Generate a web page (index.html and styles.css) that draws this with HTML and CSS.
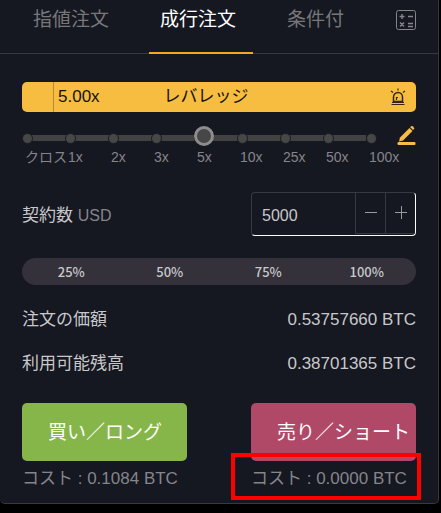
FILE: index.html
```
<!DOCTYPE html>
<html lang="ja">
<head>
    <meta charset="UTF-8">
    <meta name="viewport" content="width=device-width, initial-scale=1.0">
    <title>成行注文</title>
    <link rel="stylesheet" href="styles.css">
</head>
<body>
<div class="order-panel">
    <nav class="tabs">
        <button type="button" class="tab">指値注文</button>
        <button type="button" class="tab active">成行注文</button>
        <button type="button" class="tab">条件付</button>
        <button type="button" class="icon-button calc-button" aria-label="計算機">
            <svg width="20" height="20" viewBox="0 0 20 20" fill="none" stroke="#85858a">
                <rect x="0.5" y="0.5" width="19" height="19" rx="2"/>
                <path d="M3.500 6.500h5M6 4v5M12 6.500h5M4 12.500l4 4M8 12.500l-4 4M12 13.500h5M12 16.500h5" stroke-width="1.400"/>
            </svg>
        </button>
    </nav>

    <form class="order-form">
        <div class="leverage-bar">
            <span class="leverage-value">5.00x</span>
            <label for="leverage">レバレッジ</label>
            <svg class="alarm-icon" width="16" height="18" viewBox="0 0 16 18" fill="none" stroke="#33270f">
                <path d="M3.500 13.500V9a4.500 4.500 0 0 1 9 0v4.500z" stroke-width="1.500"/>
                <path d="M6.500 12V9.500h1.500M2 14.500h12M1.500 16.500h13M8 0.500v2M1 3l2 1.500M15 3l-2 1.500" stroke-width="1.200"/>
            </svg>
        </div>

        <div class="slider-row">
            <div class="slider">
                <div class="slider-dots">
                    <i></i><i></i><i></i><i></i><i></i><i></i><i></i><i></i><i></i>
                </div>
                <input type="range" id="leverage" min="0" max="80" step="1" value="41">
            </div>
            <button type="button" class="icon-button" aria-label="編集">
                <svg width="19" height="20" viewBox="0 0 19 20" fill="#f6bd41">
                    <path d="M3 11.500L12.500 2l3 3L6 14.500l-4 1z"/>
                    <path d="M13.200 1.300l1-1a1 1 0 0 1 1.400 0l1.400 1.400a1 1 0 0 1 0 1.400l-1 1z"/>
                    <rect x="0.500" y="16" width="18" height="3" rx="1"/>
                </svg>
            </button>
        </div>
        <div class="slider-labels">
            <span>クロス</span><span>1x</span><span>2x</span><span>3x</span><span>5x</span><span>10x</span><span>25x</span><span>50x</span><span>100x</span>
        </div>

        <div class="two-columns quantity">
            <label for="quantity">契約数 <span class="unit">USD</span></label>
            <div class="stepper">
                <input type="text" id="quantity" value="5000" inputmode="numeric">
                <button type="button" aria-label="減らす">
                    <svg width="14" height="14" viewBox="0 0 14 14" stroke="#9a9a9e"><path d="M1 6.500h12"/></svg>
                </button>
                <button type="button" aria-label="増やす">
                    <svg width="14" height="14" viewBox="0 0 14 14" stroke="#9a9a9e"><path d="M1 6.500h12M7.500 0v13"/></svg>
                </button>
            </div>
        </div>

        <div class="percent-bar">
            <button type="button">25%</button>
            <button type="button">50%</button>
            <button type="button">75%</button>
            <button type="button">100%</button>
        </div>

        <div class="info-row"><span>注文の価額</span><span>0.53757660 BTC</span></div>
        <div class="info-row"><span>利用可能残高</span><span>0.38701365 BTC</span></div>

        <div class="two-columns actions">
            <div class="action">
                <button type="button" class="order-button buy">買い／ロング</button>
                <div class="cost">コスト : 0.1084 BTC</div>
            </div>
            <div class="action">
                <button type="button" class="order-button sell">売り／ショート</button>
                <div class="cost">コスト : 0.0000 BTC</div>
                <div class="highlight"></div>
            </div>
        </div>
    </form>
</div>
</body>
</html>
```
FILE: styles.css
```
* {
    box-sizing: border-box;
}
body {
    margin: 0;
    background-color: #000;
    color: #c8c8ca;
    font-family: "Liberation Sans", "Noto Sans CJK JP", sans-serif;
    font-size: 17px;
}
button {
    margin: 0;
    padding: 0;
    border: none;
    background: none;
    color: inherit;
    font: inherit;
    cursor: pointer;
}
svg {
    display: block;
}
.order-panel {
    margin-right: 2px;
    background-color: #151721;
    border: 1px solid #383842;
    border-width: 0 1px 1px 0;
    border-radius: 0 0 5px 5px;
}

/* タブ */
.tabs {
    display: flex;
    align-items: stretch;
    gap: 23px;
    height: 54px;
    padding: 0 22px;
    border-bottom: 1px solid #383842;
}
.tab {
    margin-bottom: -1px;
    padding: 0 17px 12px 11px;
    border-bottom: 2px solid transparent;
    color: #77777a;
    font-size: 19px;
    line-height: 40px;
    white-space: nowrap;
}
.tab.active {
    border-color: #f5a623;
    color: #fff;
}
.calc-button {
    align-self: flex-start;
    margin: 10px 0 0 auto;
}

.order-form {
    padding: 28px 22px 7px;
}

/* レバレッジ */
.leverage-bar {
    display: grid;
    grid-template-columns: 1fr auto 1fr;
    align-items: center;
    height: 30px;
    border-radius: 5px;
    background: linear-gradient(#b88d31, #b88d31) 31px 0 / 1px 100% no-repeat #f6bd41;
    color: #15130d;
}
.leverage-value {
    padding-left: 36px;
}
.leverage-bar label {
    padding-right: 26px;
    line-height: 28px;
}
.alarm-icon {
    justify-self: end;
    margin-right: 10px;
}
.slider-row {
    display: flex;
    gap: 20px;
    height: 20px;
    margin-top: 14px;
}
.slider {
    display: grid;
    flex: 1;
}
.slider-dots,
.slider input {
    grid-area: 1 / 1;
}
.slider-dots {
    display: flex;
    justify-content: space-between;
    align-items: center;
    padding: 4px 1px 0;
    background: linear-gradient(#424242, #424242) 6px 9px / calc(100% - 17px) 6px no-repeat;
}
.slider-dots i {
    width: 9px;
    height: 9px;
    border-radius: 50%;
    background-color: #474747;
    box-shadow: 0 0 0 1px #1e1f26;
}
.slider input {
    width: 100%;
    height: 20px;
    margin: 0;
    appearance: none;
    background: transparent;
}
.slider input::-webkit-slider-thumb {
    appearance: none;
    width: 20px;
    height: 20px;
    border: 3px solid #8d8d8d;
    border-radius: 50%;
    background-color: #474747;
}
.slider-labels {
    display: grid;
    grid-template-columns: repeat(9, minmax(0, 1fr));
    padding: 0 4px 0 3px;
    color: #85858a;
    font-size: 14px;
    line-height: 22px;
    white-space: nowrap;
}

/* 契約数 */
.two-columns {
    display: grid;
    grid-template-columns: repeat(2, minmax(0, 1fr));
    gap: 64px;
}
.quantity {
    align-items: center;
    margin-top: 24px;
}
.quantity label {
    padding-bottom: 2px;
    white-space: nowrap;
}
.unit {
    color: #85858a;
    font-size: 16px;
}
.stepper {
    display: flex;
    height: 44px;
    border: 1px solid #383842;
    border-right-color: #fff;
    border-bottom-color: #fff;
    border-radius: 4px;
}
.stepper input {
    flex: 1;
    min-width: 0;
    padding: 4px 0 0 10px;
    border: none;
    outline: none;
    background: none;
    color: inherit;
    font: inherit;
    font-size: 16px;
}
.stepper button {
    display: flex;
    align-items: center;
    justify-content: center;
    width: 30px;
    height: 41px;
    border-left: 1px solid #383842;
    border-bottom: 1px solid #383842;
}

.percent-bar {
    display: grid;
    grid-template-columns: repeat(4, 1fr);
    height: 27px;
    margin: 22px 0 13px;
    border-radius: 14px;
    background-color: #34313b;
    font-family: "Noto Sans CJK JP", sans-serif;
    font-size: 13px;
    font-weight: 500;
    line-height: 27px;
}
.info-row {
    display: flex;
    justify-content: space-between;
    line-height: 44px;
}

/* 注文ボタン */
.actions {
    margin-top: 17px;
}
.action {
    position: relative;
}
.order-button {
    display: block;
    width: 100%;
    height: 58px;
    padding: 0 0 4px 26px;
    border-radius: 5px;
    color: #fff;
    font-size: 19px;
    text-align: left;
    white-space: nowrap;
}
.buy {
    background-color: #86b649;
}
.sell {
    background-color: #b04868;
}
.cost {
    color: #85858a;
    line-height: 35px;
    white-space: nowrap;
}
.highlight {
    position: absolute;
    top: 50px;
    right: -5px;
    left: -20px;
    height: 47px;
    border: 4px solid #f00;
    pointer-events: none;
}
```
